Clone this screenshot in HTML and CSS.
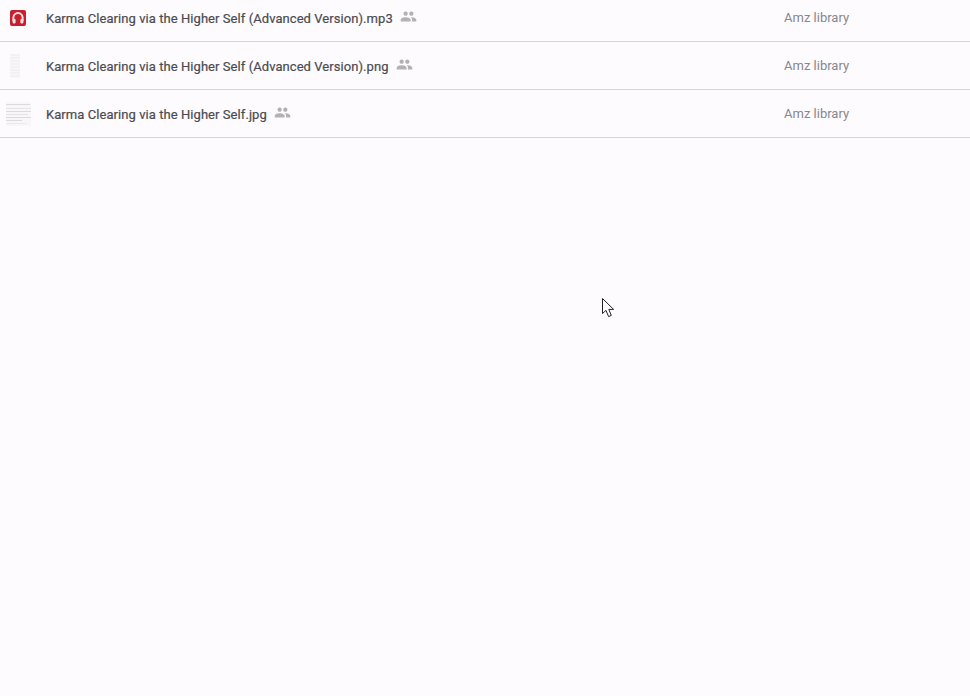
FILE: index.html
```html
<!DOCTYPE html>
<html lang="en">
<head>
<meta charset="utf-8">
<title>Files</title>
<link rel="stylesheet" href="styles.css">
</head>
<body>
<svg class="defs" width="0" height="0" aria-hidden="true">
  <symbol id="people" viewBox="0 0 24 24">
    <path d="M16 11c1.66 0 2.99-1.34 2.99-3S17.66 5 16 5s-3 1.34-3 3 1.34 3 3 3zm-8 0c1.66 0 2.99-1.34 2.99-3S9.66 5 8 5 5 6.34 5 8s1.34 3 3 3zm0 2c-2.33 0-7 1.17-7 3.5V19h14v-2.5c0-2.33-4.67-3.5-7-3.5zm8 0c-.29 0-.62.02-.97.05 1.16.84 1.97 1.97 1.97 3.45V19h6v-2.5c0-2.33-4.67-3.5-7-3.5z"/>
  </symbol>
</svg>
<main class="list">
  <div class="row">
    <div class="thumb">
      <svg class="audio" width="16" height="16" viewBox="0 0 16 16">
        <rect width="16" height="16" rx="2" fill="#c5202e"/>
        <path d="M3.4 11V7.6a4.6 4.6 0 0 1 9.2 0V11" fill="none" stroke="#f8dfe1" stroke-width="2"/>
        <rect x="2.6" y="9" width="3" height="4.4" rx=".8" fill="#f8dfe1"/>
        <rect x="10.4" y="9" width="3" height="4.4" rx=".8" fill="#f8dfe1"/>
      </svg>
    </div>
    <span class="name">Karma Clearing via the Higher Self (Advanced Version).mp3</span>
    <svg class="shared"><use href="#people"/></svg>
    <span class="owner">Amz library</span>
  </div>
  <div class="row">
    <div class="thumb">
      <div class="page-narrow"></div>
    </div>
    <span class="name">Karma Clearing via the Higher Self (Advanced Version).png</span>
    <svg class="shared"><use href="#people"/></svg>
    <span class="owner">Amz library</span>
  </div>
  <div class="row">
    <div class="thumb">
      <div class="page-wide"></div>
    </div>
    <span class="name">Karma Clearing via the Higher Self.jpg</span>
    <svg class="shared"><use href="#people"/></svg>
    <span class="owner">Amz library</span>
  </div>
</main>
<svg class="cursor" width="14" height="22" viewBox="0 0 14 22">
  <path d="M1.5 1.5V16.5L5 13.4L7.6 19.6L10.3 18.4L7.8 12.4H12.6Z" fill="#fff" stroke="#222" stroke-width="1"/>
</svg>
</body>
</html>
```
FILE: styles.css
```css
html, body {
  margin: 0;
  height: 100%;
  background: #fdfbfe;
  overflow: hidden;
}
body {
  position: relative;
  font-family: Roboto, "Liberation Sans", sans-serif;
}
.defs {
  position: absolute;
}
.list {
  margin-top: -6px;
}
.row {
  display: flex;
  align-items: center;
  height: 47px;
  border-bottom: 1px solid #d6d5d8;
}
.thumb {
  flex: 0 0 36px;
  margin-right: 10px;
  display: flex;
  justify-content: center;
}
.audio {
  display: block;
}
.page-narrow {
  width: 10px;
  height: 24px;
  margin-right: 6px;
  background: repeating-linear-gradient(#f3f1f5 0 2px, #f8f6f9 2px 3px);
}
.page-wide {
  width: 25px;
  height: 24px;
  background:
    linear-gradient(#dcdae0, #dcdae0) 0 2px / 24px 1px no-repeat,
    linear-gradient(#e6e4e9, #e6e4e9) 0 6px / 25px 1px no-repeat,
    linear-gradient(#dcdae0, #dcdae0) 0 9px / 25px 1px no-repeat,
    linear-gradient(#e6e4e9, #e6e4e9) 0 12px / 22px 1px no-repeat,
    linear-gradient(#dcdae0, #dcdae0) 0 15px / 25px 1px no-repeat,
    linear-gradient(#dddbe1, #dddbe1) 0 18px / 16px 1px no-repeat,
    linear-gradient(#ebe9ee, #ebe9ee) 0 21px / 20px 1px no-repeat,
    #f8f6f9;
}
.name {
  font-size: 13px;
  font-weight: 400;
  letter-spacing: 0.065px;
  -webkit-text-stroke: 0.2px #4c4c50;
  color: #4c4c50;
  line-height: 16px;
  position: relative;
  top: 1px;
}
.shared {
  width: 17px;
  height: 17px;
  margin-left: 7px;
  fill: #b2b1b5;
  position: relative;
  top: -1px;
}
.owner {
  position: absolute;
  left: 784px;
  font-size: 13px;
  color: #88878b;
  line-height: 16px;
}
.cursor {
  position: absolute;
  left: 601px;
  top: 297px;
}
```
